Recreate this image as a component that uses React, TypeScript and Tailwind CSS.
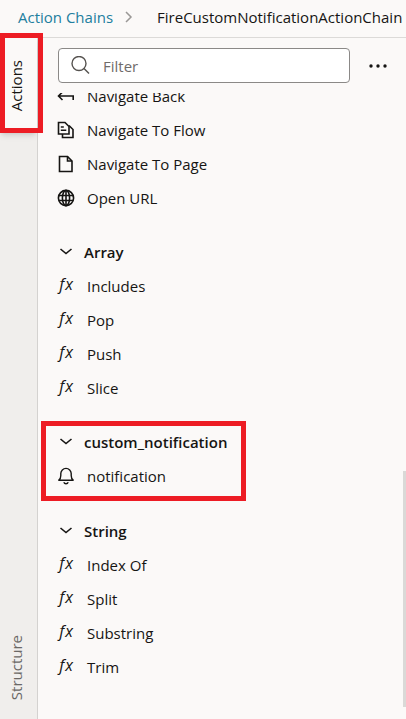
import { ReactNode } from "react";

function BackIcon() {
  return (
    <svg width="18" height="18" viewBox="0 0 18 18" fill="none" stroke="currentColor" strokeWidth="1.6">
      <path d="M5.5 5 1.5 9l4 4M1.5 9h14.7v4" />
    </svg>
  );
}

function FlowIcon() {
  return (
    <svg width="18" height="18" viewBox="0 0 18 18" fill="none" stroke="currentColor" strokeWidth="1.6">
      <path d="M1.500 1.500h6.500l4 4v7.500H1.500z" />
      <path d="M3.800 6h3M3.800 9.200h5.500" />
      <path d="M12 4.500l4 4v8H5.500v-3.500" />
    </svg>
  );
}

function PageIcon() {
  return (
    <svg width="18" height="18" viewBox="0 0 18 18" fill="none" stroke="currentColor" strokeWidth="1.6">
      <path d="M2.500 1.500h8l4.500 4.500v10.500H2.500z" />
      <path d="M10.500 1.500V6H15" />
    </svg>
  );
}

function GlobeIcon() {
  return (
    <svg width="18" height="18" viewBox="0 0 18 18" fill="none" stroke="currentColor" strokeWidth="1.6">
      <circle cx="9" cy="9" r="7.600" />
      <ellipse cx="9" cy="9" rx="3.600" ry="7.600" />
      <path d="M9 1.400v15.200M2 6.500h14M2 11.500h14" />
    </svg>
  );
}

function BellIcon() {
  return (
    <svg width="18" height="18" viewBox="0 0 18 18" fill="none" stroke="currentColor" strokeWidth="1.400">
      <path d="M1.800 13.200c1.600-1.100 2-2.300 2-4.600V6.600a5.200 5.200 0 0 1 10.400 0v2c0 2.300.4 3.500 2 4.600z" strokeLinejoin="round" />
      <path d="M6.800 15.300c.4 1 1.200 1.400 2.200 1.400s1.800-.4 2.200-1.400" />
    </svg>
  );
}

function FxIcon() {
  return (
    <span aria-hidden="true" className="flex h-5 items-center gap-px pb-1 text-base leading-5 font-medium italic">
      <span>f</span>
      <span>x</span>
    </span>
  );
}

function Item({ icon, label }: { icon: ReactNode; label: string }) {
  return (
    <li>
      <button type="button" className="flex h-[34px] w-full items-center gap-3 pl-[19px] text-left">
        <span className="flex w-[18px] shrink-0 justify-center">{icon}</span>
        <span>{label}</span>
      </button>
    </li>
  );
}

function Group({ title, highlighted, children }: { title: string; highlighted?: boolean; children: ReactNode }) {
  return (
    <section className={highlighted ? "relative pb-px" : "relative"}>
      <h2>
        <button type="button" aria-expanded="true" className="flex h-[34px] w-full items-center gap-[9px] pl-[19px] text-left font-semibold">
          <svg width="18" height="18" viewBox="0 0 18 18" fill="none" stroke="currentColor" strokeWidth="1.600">
            <path d="M3.500 6 9 10.500 14.500 6" />
          </svg>
          <span>{title}</span>
        </button>
      </h2>
      <ul>{children}</ul>
      {highlighted && (
        <div className="pointer-events-none absolute -top-1 -bottom-[7px] left-[3px] w-[205px] border-[5px] border-[#ed1c24]" />
      )}
    </section>
  );
}

export default function App() {
  return (
    <div className="flex h-screen flex-col overflow-hidden bg-[#fbf9f8] font-['Open_Sans','Noto_Sans',sans-serif] text-[15px] leading-5 text-[#161513]">
      <nav className="flex h-[38px] shrink-0 items-center border-b border-[#dcdad8] pb-1 pl-[18px] whitespace-nowrap">
        <a href="#chains" className="text-[#227e9e]">Action Chains</a>
        <svg className="mr-6 ml-[10px] shrink-0" width="10" height="14" viewBox="0 0 10 14" fill="none" stroke="#9a9896" strokeWidth="1.500">
          <path d="m3 2 5 5-5 5" />
        </svg>
        <span className="font-medium">FireCustomNotificationActionChain</span>
      </nav>

      <div className="flex min-h-0 grow">
        <div role="tablist" className="flex w-[38px] shrink-0 flex-col justify-between border-r border-[#d4d2d0] bg-[#f0eeec]">
          <button type="button" role="tab" aria-selected="true" className="relative flex h-[95px] items-center justify-center bg-[#fbf9f8] pr-1.5 font-medium shadow-md">
            <span className="rotate-180 [writing-mode:vertical-rl]">Actions</span>
            <span className="pointer-events-none absolute -top-[5px] -right-[6px] bottom-0 left-0 border-[5px] border-[#ed1c24]" />
          </button>
          <button type="button" role="tab" aria-selected="false" className="flex h-[102px] items-center justify-center pr-1.5 text-[#6b6866]">
            <span className="rotate-180 [writing-mode:vertical-rl]">Structure</span>
          </button>
        </div>

        <main className="flex min-w-0 grow flex-col">
          <div className="flex shrink-0 items-center pt-[10px] pb-[10px] pl-5">
            <label className="flex h-[35px] min-w-0 grow items-center gap-3 rounded-[4px] border border-[#8b8987] bg-white pl-3">
              <svg className="shrink-0" width="20" height="20" viewBox="0 0 20 20" fill="none" stroke="#55524f" strokeWidth="1.400">
                <circle cx="8" cy="7.500" r="7" />
                <path d="m13 12.500 5 5" />
              </svg>
              <input type="text" aria-label="Filter" placeholder="Filter" className="min-w-0 grow bg-transparent outline-none placeholder:text-[#6f6c6a]" />
            </label>
            <button type="button" aria-label="More" className="flex w-14 shrink-0 justify-center">
              <svg width="18" height="6" viewBox="0 0 18 6" fill="currentColor">
                <circle cx="2" cy="3" r="1.700" />
                <circle cx="9" cy="3" r="1.700" />
                <circle cx="16" cy="3" r="1.700" />
              </svg>
            </button>
          </div>

          <div className="relative min-h-0 grow overflow-hidden">
            <div className="-mt-[14px] flex flex-col gap-5">
              <ul>
                <Item icon={<BackIcon />} label="Navigate Back" />
                <Item icon={<FlowIcon />} label="Navigate To Flow" />
                <Item icon={<PageIcon />} label="Navigate To Page" />
                <Item icon={<GlobeIcon />} label="Open URL" />
              </ul>
              <Group title="Array">
                <Item icon={<FxIcon />} label="Includes" />
                <Item icon={<FxIcon />} label="Pop" />
                <Item icon={<FxIcon />} label="Push" />
                <Item icon={<FxIcon />} label="Slice" />
              </Group>
              <Group title="custom_notification" highlighted>
                <Item icon={<BellIcon />} label="notification" />
              </Group>
              <Group title="String">
                <Item icon={<FxIcon />} label="Index Of" />
                <Item icon={<FxIcon />} label="Split" />
                <Item icon={<FxIcon />} label="Substring" />
                <Item icon={<FxIcon />} label="Trim" />
              </Group>
            </div>
            <div className="absolute right-0 bottom-3 h-[236px] w-[3px] bg-[#dad9d7]" />
          </div>
        </main>
      </div>
    </div>
  );
}
